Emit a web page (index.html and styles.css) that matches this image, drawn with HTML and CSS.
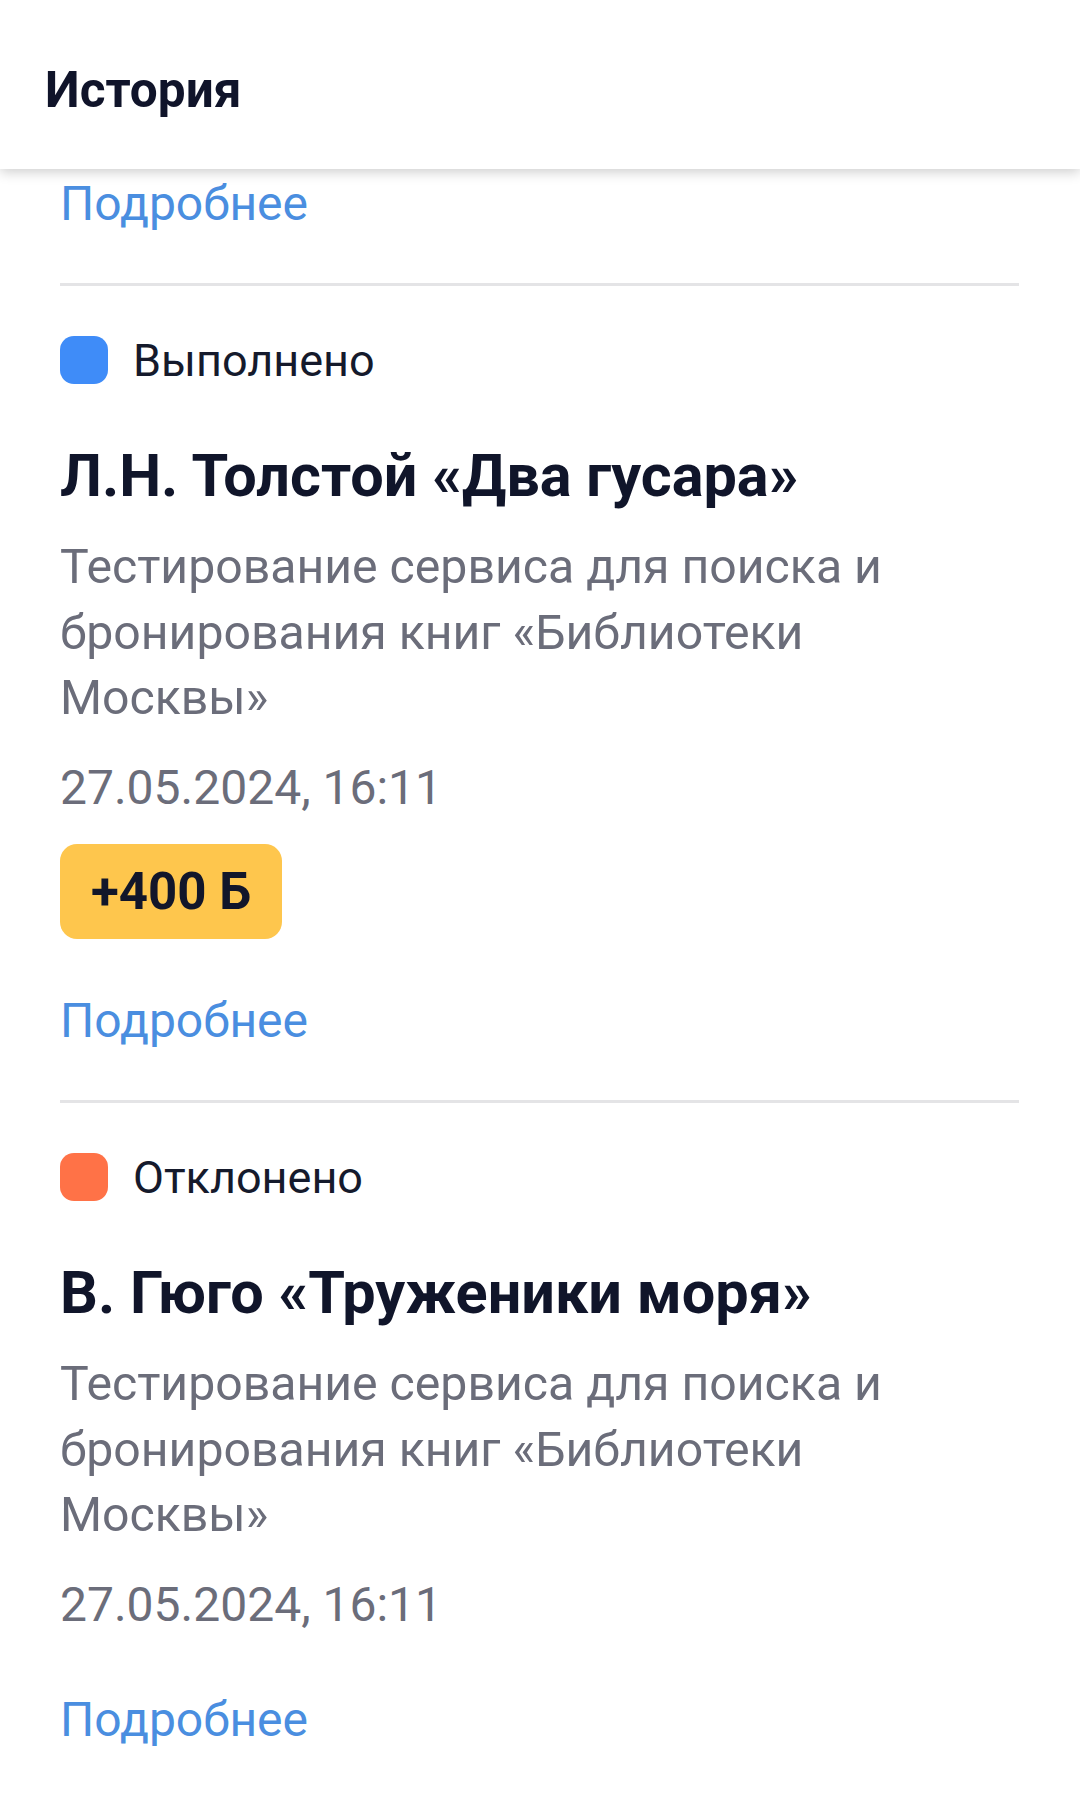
FILE: index.html
```html
<!DOCTYPE html>
<html lang="ru">
<head>
    <meta charset="utf-8">
    <title>История</title>
    <link rel="stylesheet" href="styles.css">
</head>
<body>
    <header class="topbar">
        <h1>История</h1>
    </header>

    <main class="history">
        <a class="more-link" href="#">Подробнее</a>
        <hr class="divider">

        <section class="entry">
            <div class="status">
                <span class="status-dot done"></span>
                <span class="status-text">Выполнено</span>
            </div>
            <h2 class="entry-title">Л.Н. Толстой «Два гусара»</h2>
            <p class="entry-desc">Тестирование сервиса для поиска и бронирования книг «Библиотеки Москвы»</p>
            <p class="entry-date">27.05.2024, 16:11</p>
            <span class="points">+400 Б</span>
            <a class="more-link" href="#">Подробнее</a>
        </section>
        <hr class="divider">

        <section class="entry">
            <div class="status">
                <span class="status-dot rejected"></span>
                <span class="status-text">Отклонено</span>
            </div>
            <h2 class="entry-title">В. Гюго «Труженики моря»</h2>
            <p class="entry-desc">Тестирование сервиса для поиска и бронирования книг «Библиотеки Москвы»</p>
            <p class="entry-date">27.05.2024, 16:11</p>
            <a class="more-link" href="#">Подробнее</a>
        </section>
    </main>
</body>
</html>
```

FILE: styles.css
```css
body {
    margin: 0;
    font-family: Roboto, "Liberation Sans", Arial, sans-serif;
    background-color: #fff;
    color: #12162a;
}

.topbar {
    position: sticky;
    top: 0;
    z-index: 2;
    height: 169px;
    box-sizing: border-box;
    padding: 60px 0 0 45px;
    background-color: #fff;
    box-shadow: 0 3px 12px rgba(0, 0, 0, 0.2);
}

.topbar h1 {
    margin: 0;
    font-size: 49.5px;
    line-height: 60px;
    font-weight: 700;
    color: #10142a;
}

.history {
    padding: 2px 61px 0 60px;
}

.more-link {
    display: block;
    font-size: 48px;
    line-height: 66px;
    color: #4a8ee0;
    text-decoration: none;
}

.divider {
    margin: 46px 0 0;
    border: none;
    height: 3px;
    background-color: #e4e4e6;
}

.entry {
    display: flex;
    flex-direction: column;
    align-items: flex-start;
}

.status {
    display: flex;
    align-items: center;
    margin-top: 50px;
    height: 48px;
}

.status-dot {
    width: 48px;
    height: 48px;
    border-radius: 14px;
    margin-right: 25px;
}

.status-dot.done {
    background-color: #3f8cf8;
}

.status-dot.rejected {
    background-color: #ff7247;
}

.status-text {
    font-size: 45px;
    color: #151a2c;
}

.entry-title {
    margin: 58px 0 0;
    font-size: 59.4px;
    line-height: 68px;
    font-weight: 700;
    color: #10152a;
}

.entry-desc {
    margin: 24px 0 0;
    max-width: 870px;
    font-size: 48.2px;
    line-height: 65.5px;
    color: #6b6d7a;
}

.entry-date {
    margin: 24px 0 0;
    font-size: 48px;
    line-height: 66px;
    color: #6b6d7a;
}

.points {
    margin-top: 23.5px;
    height: 95px;
    line-height: 95px;
    padding: 0 31px;
    border-radius: 17px;
    background-color: #fec64d;
    font-size: 51px;
    font-weight: 700;
    color: #12162a;
}

.entry .more-link {
    margin-top: 49px;
}
```
